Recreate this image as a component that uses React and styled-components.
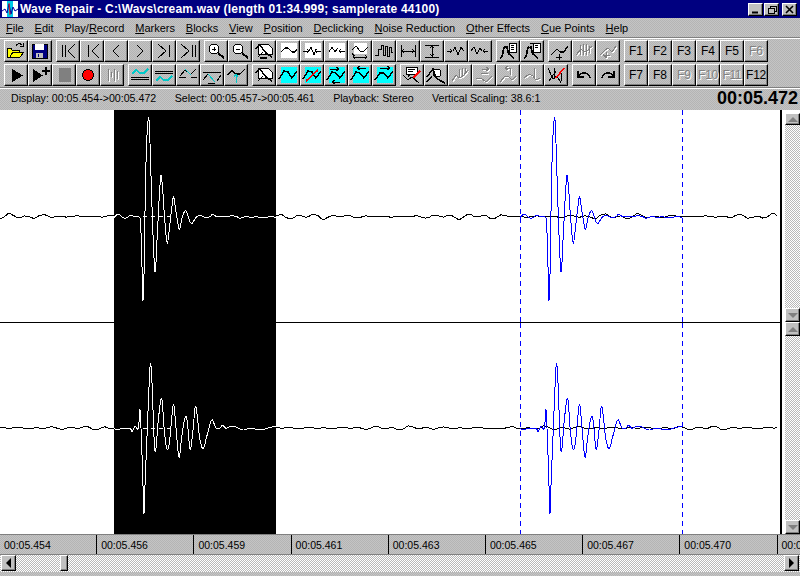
import React from 'react';
import styled, { createGlobalStyle } from 'styled-components';

const dither = `repeating-conic-gradient(#c4c4c4 0 25%, #b4b4b4 0 50%) 0 0 / 2px 2px`;
const track = `repeating-conic-gradient(#ffffff 0 25%, #b8b8b8 0 50%) 0 0 / 2px 2px`;

const Global = createGlobalStyle`
    html, body {
        margin: 0;
        padding: 0;
        background: #c0c0c0;
        overflow: hidden;
    }
    u { text-underline-offset: 1px; }
`;

const Win = styled.div`
    width: 800px;
    height: 576px;
    display: flex;
    flex-direction: column;
    background: ${dither};
    font-family: "Liberation Sans", Arial, sans-serif;
    color: #000;
    overflow: hidden;
`;
const TitleBar = styled.div`
    height: 18px;
    flex: none;
    background: #000080;
    display: flex;
    align-items: center;
    padding: 0 3px 0 2px;
    box-sizing: border-box;
`;
const TitleText = styled.div`
    margin-left: 2px;
    color: #fff;
    font-weight: bold;
    font-size: 12px;
    letter-spacing: 0.2px;
    white-space: nowrap;
    flex: 1;
`;
const WinButton = styled.div`
    width: 15px;
    height: 13px;
    box-sizing: border-box;
    margin-left: ${p => p.$gap || 0}px;
    background: #c0c0c0;
    border: 1px solid;
    border-color: #fff #000 #000 #fff;
    box-shadow: inset -1px -1px #808080;
    display: flex;
    align-items: center;
    justify-content: center;
`;
const MenuBar = styled.div`
    height: 20px;
    flex: none;
    display: flex;
    align-items: center;
    gap: 10.85px;
    padding-left: 6px;
    font-size: 11px;
    box-sizing: border-box;
`;
const Toolbar = styled.div`
    flex: none;
    height: 49px;
    box-sizing: border-box;
    padding-top: 1px;
    border-top: 1px solid #fff;
    box-shadow: 0 -1px #808080;
    display: flex;
    flex-direction: column;
    gap: 2px;
`;
const Row = styled.div`
    display: flex;
    gap: 4px;
    padding-left: 4px;
    height: 22px;
`;
const Group = styled.div`
    display: flex;
`;
const Button = styled.div`
    width: 24px;
    height: 22px;
    box-sizing: border-box;
    border: 1px solid;
    border-color: #fff #000 #000 #fff;
    box-shadow: inset -1px -1px #808080;
    display: flex;
    align-items: center;
    justify-content: center;
    font-size: 12px;
    color: ${p => (p.$off ? '#808080' : '#000')};
    text-shadow: ${p => (p.$off ? '1px 1px 0 #fff' : 'none')};
    letter-spacing: ${p => (p.$wide ? '-0.3px' : '0')};
`;
const IconSvg = styled.svg`
    display: block;
    width: 22px;
    height: 20px;
    fill: none;
    stroke: currentColor;
    stroke-width: 1;
    shape-rendering: crispEdges;
    filter: ${p => (p.$off ? 'drop-shadow(1px 1px 0 #fff)' : 'none')};
`;
const StatusBar = styled.div`
    flex: none;
    height: 23px;
    box-sizing: border-box;
    border-top: 1px solid #808080;
    box-shadow: inset 0 1px #fff;
    display: flex;
    align-items: center;
    gap: 18.5px;
    padding: 0 2px 2px 11px;
    font-size: 10.65px;
    white-space: nowrap;
`;
const Clock = styled.div`
    margin-left: auto;
    font-size: 18px;
    font-weight: bold;
`;
const WaveArea = styled.div`
    flex: none;
    height: 424px;
    display: flex;
`;
const Channels = styled.div`
    width: 780px;
    background: #fff;
    display: flex;
    flex-direction: column;
`;
const Pane = styled.svg`
    display: block;
    flex: none;
    width: 780px;
    height: ${p => p.$h}px;
    fill: none;
    shape-rendering: crispEdges;
`;
const Divider = styled.div`
    height: 1px;
    flex: none;
    background: #000;
`;
const VScroll = styled.div`
    width: 20px;
    box-sizing: border-box;
    border-left: 2px solid #000;
    background: #fff;
    padding: 3px 0 0 3px;
    display: flex;
    flex-direction: column;
`;
const VTrack = styled.div`
    flex: ${p => p.$h}px 0 0;
    height: ${p => p.$h}px;
    display: flex;
    flex-direction: column;
    justify-content: space-between;
    background: ${track};
`;
const ArrowBtn = styled.div`
    width: 15px;
    height: ${p => p.$h || 14}px;
    flex: none;
    box-sizing: border-box;
    background: #c0c0c0;
    border: 1px solid;
    border-color: #fff #000 #000 #fff;
    box-shadow: inset -1px -1px #808080;
    display: flex;
    align-items: center;
    justify-content: center;
`;
const Tri = styled.div`
    width: 0;
    height: 0;
    border-left: ${p => (p.$dir === 'right' ? '5px solid #000' : p.$dir === 'left' ? 'none' : '5px solid transparent')};
    border-right: ${p => (p.$dir === 'left' ? '5px solid #000' : p.$dir === 'right' ? 'none' : '5px solid transparent')};
    border-top: ${p => (p.$dir === 'down' ? '5px solid #808080' : p.$dir === 'up' ? 'none' : '5px solid transparent')};
    border-bottom: ${p => (p.$dir === 'up' ? '5px solid #808080' : p.$dir === 'down' ? 'none' : '5px solid transparent')};
`;
const Ruler = styled.div`
    flex: none;
    height: 21px;
    box-sizing: border-box;
    border-top: 1px solid #808080;
    border-bottom: 1px solid #808080;
    display: flex;
    font-size: 10.5px;
    overflow: hidden;
`;
const Tick = styled.div`
    flex: none;
    width: 97.2px;
    box-sizing: border-box;
    border-right: 1px solid #000;
    padding-left: 4px;
    line-height: 20px;
    white-space: nowrap;
`;
const HScroll = styled.div`
    flex: none;
    height: 17px;
    display: flex;
    align-items: flex-start;
    justify-content: space-between;
    padding: 0 1px;
    background: ${track};
    position: relative;
`;
const Thumb = styled.div`
    position: absolute;
    left: 60px;
    top: 0;
    width: 8px;
    height: 16px;
    box-sizing: border-box;
    background: #c0c0c0;
    border: 1px solid;
    border-color: #fff #000 #000 #fff;
    box-shadow: inset -1px -1px #808080;
`;
const HArrow = styled(ArrowBtn)`
    height: 16px;
`;

/* icons: coordinates are those of the 24x22 button */
const Ico = ({ off, children }) => (
    <IconSvg viewBox="1 1 22 20" $off={off}>{children}</IconSvg>
);
const P = ({ d, c, w }) => <path d={d} stroke={c} strokeWidth={w} />;
const Cyan = () => <path d="M5 3H21V19H5Z" stroke="none" fill="#00ffff" />;
const Paper = () => <path d="M5 3H21V18H5Z" stroke="none" fill="#fff" />;

const ICONS = {
    open: <><path d="M3 8H7L8 10H15V17H3Z" fill="#ffff00" stroke="#000" /><path d="M6 17L9 12H20L16 17Z" fill="#ffff00" stroke="#000" /><P d="M12 6C13 3 16 3 18 5M16 6H19V3" c="#000" /></>,
    save: <><path d="M4 4H19V18H4Z" fill="#000080" stroke="#000" /><path d="M7 4H16V10H7Z" fill="#fff" stroke="none" /><path d="M8 13H15V18H8Z" fill="#c0c0c0" stroke="none" /><P d="M10 14V17" c="#000080" /></>,
    first: <P d="M6 5V17M9 5V17M19 4L12 11L19 18" />,
    prevm: <P d="M8 5V17M19 4L12 11L19 18" />,
    prev: <P d="M15 5L9 11L15 17" w="1.4" />,
    next: <P d="M9 5L15 11L9 17" w="1.4" />,
    nextm: <P d="M17 5V17M6 4L14 11L6 18" />,
    last: <P d="M19 5V17M16 5V17M5 4L13 11L5 18" />,
    zin: <><circle cx="10" cy="9" r="5" fill="#fff" /><P d="M14 13L20 18" w="2" /><P d="M8 9H12M10 7V11" /></>,
    zout: <><circle cx="10" cy="9" r="5" fill="#fff" /><P d="M14 13L20 18" w="2" /><P d="M8 9H12" /></>,
    zwave: <><path d="M6 4H16L20 8V14H6Z" fill="#fff" /><P d="M3 9L8 5L14 13L20 17M6 17L11 12M8 18L15 18" w="1.4" /></>,
    fit: <><Paper /><P d="M5 12L9 8L12 8L16 12L19 12L21 9" w="1.4" /></>,
    arrin: <><Paper /><P d="M3 11H9M7 9L9 11L7 13M21 11H15M17 9L15 11L17 13M9 11L11 7L14 15L16 9" /></>,
    arrout: <><Paper /><P d="M5 12L8 7L11 12L14 8M15 11H21M17 9L15 11L17 13" /></>,
    stretch: <><path d="M6 3H19V14H6Z" fill="#fff" stroke="none" /><P d="M4 10L8 6L12 11L16 11L20 7M5 17H19M7 15L5 17L7 19M17 15L19 17L17 19M4 13L6 16" /></>,
    pulse: <P d="M3 15H6V9H9V5H11V15H13V6H15V16H17V7H19V12H21" />,
    hspan: <P d="M5 5V17M19 5V17M5 11H19M8 9L6 11L8 13M16 9L18 11L16 13" />,
    vspan: <P d="M5 5H19M5 17H19M12 5V17M10 8L12 6L14 8M10 14L12 16L14 14" />,
    inwave: <P d="M3 11H8M6 9L8 11L6 13M9 11L11 7L14 15L17 7L20 11" />,
    outwave: <P d="M3 11L6 7L9 14L12 8L14 11M20 11H15M17 9L15 11L17 13" />,
    fig1: <><path d="M13 3H20V12H13Z" fill="#fff" /><P d="M15 5H18M15 7H18M15 9H18" /><P d="M4 18C7 17 7 12 8 8L11 7L12 12L13 14L18 18" w="1.6" /><P d="M6 12L9 6L11 9" /></>,
    fig2: <><path d="M13 3H20V12H13Z" fill="#fff" /><P d="M15 5H18M15 7H18" /><P d="M4 18C7 17 7 12 8 8L11 7L12 12L13 14L18 18" w="1.6" /><P d="M10 3H14M6 12L9 6" /></>,
    cueadd: <><P d="M3 15L9 9L12 12L16 12L20 6" w="1.4" /><P d="M8 17H14M11 14V20" /></>,
    cuedis: <P d="M4 15L9 9L12 12L16 10L20 6M8 5V15M11 4V15M14 4V15M17 6V13" />,
    cuedis2: <P d="M4 15L8 11L12 8L16 12L20 6M7 15H14M10 12V18M7 14L10 18" />,
    play: <path d="M8 5L19 11.5L8 18Z" fill="#000" stroke="none" />,
    playp: <><path d="M5 5L15 11.5L5 18Z" fill="#000" stroke="none" /><path d="M18 3V11M14 7H22" stroke="#000" strokeWidth="2" /></>,
    stop: <path d="M7 4H19V18H7Z" fill="#808080" stroke="none" />,
    rec: <circle cx="12" cy="11" r="5.5" fill="#ff0000" stroke="#000" />,
    bars: <P d="M8 5V17M11 8V13M14 5V17M17 7V15" />,
    blockTop: <><P d="M3 13H21M3 15H21" /><path d="M4 10L8 6L12 9L16 9L20 5" stroke="#00c8c8" strokeWidth="1.5" /></>,
    blockBot: <><P d="M3 7H21M3 9H21" /><path d="M4 17L8 13L12 16L16 16L20 12" stroke="#00c8c8" strokeWidth="1.5" /></>,
    blockLeft: <><P d="M3 13H10M15 13H21M4 12L9 6L11 8M15 10L20 5" /><path d="M9 5L15 11" stroke="#00c8c8" /></>,
    blockRight: <><P d="M3 8H21M3 16L8 10M17 17L21 11M8 19H15" /><path d="M8 10L15 18" stroke="#00c8c8" /></>,
    blockUp: <><P d="M3 11L8 7L12 10L16 10L21 5" w="1.4" /><path d="M12 19V10M10 13L12 10L14 13" stroke="#00c8c8" /></>,
    crossw: <><path d="M6 4H16L20 8V14H6Z" fill="#fff" /><P d="M3 9L8 5L14 13L20 17M6 17L11 12" w="1.4" /></>,
    c1: <><Cyan /><P d="M3 15L8 7L12 8L16 14L21 7" w="1.4" /></>,
    c2: <><Cyan /><P d="M3 15L8 7L12 8L16 14L21 7" w="1.4" /><path d="M6 17L18 6" stroke="#ff0000" strokeWidth="1.6" /></>,
    c3: <><Cyan /><P d="M3 16L8 8L12 9L16 14L21 7" w="1.4" /><P d="M6 5H14M12 3L15 5L12 7M9 18H16M11 16L8 18L11 20" /></>,
    c4: <><Cyan /><P d="M3 16L8 8L12 9L16 14L21 7" w="1.4" /><P d="M18 4H10M12 2L9 4L12 6" /></>,
    c5: <><Cyan /><P d="M3 16L8 9L12 9L16 14L21 7" w="1.4" /><P d="M8 4H17M15 2L18 4L15 6" /></>,
    speech: <><path d="M6 3H17V10H10L8 13V10H6Z" fill="#fff" stroke="#000" /><P d="M8 5H15M8 7H13M3 11L8 16L12 13L19 19" /><path d="M13 14L20 7" stroke="#ff0000" strokeWidth="1.6" /></>,
    magwave: <><circle cx="13" cy="9" r="4" fill="#fff" /><P d="M3 13L9 5L12 14L15 16L21 19M3 18L8 12" w="1.4" /></>,
    d1: <P d="M4 17L8 11L11 14L15 12L20 6M11 5V13M14 4V12M17 4V10" />,
    d2: <P d="M4 14L9 14L14 18L20 12M10 5H16M14 3L17 5L14 7M9 9H16" />,
    d3: <P d="M4 18L9 12L13 13L16 16L20 12M14 4H10M12 2L9 4L12 6M14 4V11" />,
    d4: <P d="M4 14L9 10L13 12L16 16L20 14M14 4V14" />,
    cross2: <><P d="M4 4L9 15L13 12L17 19M5 17L12 7M10 4V15M17 9V17" /><path d="M12 14L20 4" stroke="#ff0000" strokeWidth="1.6" /></>,
    undo: <P d="M6 7V13H12M7 12C10 7 16 8 18 14" w="1.5" />,
    redo: <P d="M18 7V13H12M17 12C14 7 8 8 6 14" w="1.5" />,
};

const ROW1 = [
    [['open'], ['save']],
    [['first'], ['prevm'], ['prev'], ['next'], ['nextm'], ['last']],
    [['zin'], ['zout'], ['zwave'], ['fit'], ['arrin'], ['arrout'], ['stretch'], ['pulse'], ['hspan'], ['vspan'], ['inwave'], ['outwave']],
    [['fig1'], ['fig2']],
    [['cueadd'], ['cuedis', 1], ['cuedis2', 1]],
    [['F1'], ['F2'], ['F3'], ['F4'], ['F5'], ['F6', 1]],
];
const ROW2 = [
    [['play'], ['playp'], ['stop'], ['rec'], ['bars', 1]],
    [['blockTop'], ['blockBot'], ['blockLeft'], ['blockRight'], ['blockUp']],
    [['crossw'], ['c1'], ['c2'], ['c3'], ['c4'], ['c5']],
    [['speech'], ['magwave'], ['d1', 1], ['d2', 1], ['d3', 1], ['d4', 1], ['cross2']],
    [['undo'], ['redo']],
    [['F7'], ['F8'], ['F9', 1], ['F10', 1], ['F11', 1], ['F12']],
];

const ToolRow = ({ groups }) => (
    <Row>
        {groups.map((g, i) => (
            <Group key={i}>
                {g.map(([name, off]) => (
                    <Button key={name} $off={!!off} $wide={name.length > 2}>
                        {ICONS[name] ? <Ico off={!!off}>{ICONS[name]}</Ico> : name}
                    </Button>
                ))}
            </Group>
        ))}
    </Row>
);

const MENUS = [
    ['F', 'ile'], ['E', 'dit'], ['Play/', 'R', 'ecord'], ['M', 'arkers'], ['B', 'locks'], ['V', 'iew'],
    ['P', 'osition'], ['D', 'eclicking'], ['N', 'oise Reduction'], ['O', 'ther Effects'], ['C', 'ue Points'], ['H', 'elp'],
];

const TICKS = ['454', '456', '459', '461', '463', '465', '467', '470', '472'];

/* burst shapes read off the reference, x relative to the start of the selection */
const BURST_TOP = [[12,322],[25,312],[35,320],[47,325],[62,316],[75,320],[88,322],[92,345],[97,500],[99,570],[103,450],[107,190],[115,25],[120,100],[126,290],[135,485],[143,350],[152,200],[158,240],[165,340],[172,400],[180,340],[190,262],[197,300],[208,358],[217,320],[228,303],[240,335],[247,340],[258,322],[270,316],[285,322],[300,320],[308,313],[320,320],[335,318],[350,320],[365,317],[380,320],[390,325],[405,320],[425,322],[440,320],[460,324],[480,320],[498,322]];
const BURST_BOTTOM = [[12,235],[22,240],[35,235],[60,236],[67,245],[75,228],[85,235],[90,175],[93,235],[97,340],[100,435],[102,490],[106,380],[112,235],[118,90],[122,40],[127,120],[132,260],[137,303],[145,210],[155,145],[162,230],[170,295],[178,280],[190,165],[198,235],[207,322],[215,260],[225,203],[232,215],[240,298],[248,250],[256,170],[263,210],[270,270],[280,296],[290,260],[305,210],[318,235],[330,235],[338,225],[348,235],[365,228],[380,232],[400,240],[420,235],[440,238],[460,238],[480,232],[498,230]];

// catmull-rom through the read points so the peaks stay round
const burstPath = (pts, dx, dy) => {
    const p = pts.map(([x, y]) => [110 + x / 3 + dx, y / 3 + dy]);
    let d = `M${p[0][0].toFixed(1)} ${p[0][1].toFixed(1)}`;
    for (let i = 0; i < p.length - 1; i++) {
        const a = p[Math.max(i - 1, 0)];
        const b = p[i];
        const c = p[i + 1];
        const e = p[Math.min(i + 2, p.length - 1)];
        const c1 = [b[0] + (c[0] - a[0]) / 6, b[1] + (c[1] - a[1]) / 6];
        const c2 = [c[0] - (e[0] - b[0]) / 6, c[1] - (e[1] - b[1]) / 6];
        d += `C${c1[0].toFixed(1)} ${c1[1].toFixed(1)} ${c2[0].toFixed(1)} ${c2[1].toFixed(1)} ${c[0].toFixed(1)} ${c[1].toFixed(1)}`;
    }
    return d;
};

const noiseLine = (base, seed, amp) => {
    const out = [];
    for (let x = 0; x <= 779; x += 3) {
        const env = 0.65 + 0.45 * Math.sin(x * 0.041 + seed);
        const n = Math.sin(x * 0.37 + seed) * 1.7 + Math.sin(x * 0.19 + seed * 2) * 1.2 + Math.sin(x * 0.83 + seed * 3) * 0.4;
        out.push(`${x},${(base + n * env * amp).toFixed(1)}`);
    }
    return out.join(' ');
};

const Channel = ({ height, base, seed, amp, burst, dy }) => (
    <Pane $h={height} viewBox={`0 0 780 ${height}`}>
        <polyline points={noiseLine(base, seed, amp)} stroke="#000" />
        <rect x="114" y="0" width="162" height={height} fill="#000" />
        <path d={burstPath(burst, 0, dy)} stroke="#fff" />
        <line x1="143" y1={base} x2="172" y2={base} stroke="#fff" strokeDasharray="4 4" />
        <path d={burstPath(burst, 406, dy)} stroke="#0000ff" />
        <line x1="520.5" y1="0" x2="520.5" y2={height} stroke="#0000ff" strokeDasharray="5 4" />
        <line x1="682.5" y1="0" x2="682.5" y2={height} stroke="#0000ff" strokeDasharray="5 4" />
    </Pane>
);

export default function App() {
    return (
        <Win>
            <Global />
            <TitleBar>
                <svg width="16" height="16" viewBox="0 0 16 16">
                    <rect width="16" height="16" fill="#fff" />
                    <rect x="5" y="0" width="6" height="16" fill="#00c8e8" />
                    <path d="M0 10L3 8L5 12L7 3L9 13L11 6L13 10L16 8" stroke="#0000a0" fill="none" />
                    <path d="M7 2L8 14" stroke="#e02020" fill="none" />
                </svg>
                <TitleText>{'Wave Repair - C:\\Wavs\\cream.wav (length 01:34.999; samplerate 44100)'}</TitleText>
                <WinButton>
                    <svg width="9" height="9" viewBox="0 0 9 9"><path d="M1 7.5H7" stroke="#000" strokeWidth="2" /></svg>
                </WinButton>
                <WinButton $gap={1}>
                    <svg width="10" height="9" viewBox="0 0 10 9" fill="none" stroke="#000" shapeRendering="crispEdges"><path d="M3 3V1H9V6H7M1 3H7V8H1Z" /><path d="M3 1.5H9M1 3.5H7" /></svg>
                </WinButton>
                <WinButton $gap={3}>
                    <svg width="9" height="9" viewBox="0 0 9 9"><path d="M1 1L8 8M8 1L1 8" stroke="#000" strokeWidth="1.6" /></svg>
                </WinButton>
            </TitleBar>
            <MenuBar>
                {MENUS.map((m, i) =>
                    m.length === 3 ? (
                        <span key={i}>{m[0]}<u>{m[1]}</u>{m[2]}</span>
                    ) : (
                        <span key={i}><u>{m[0]}</u>{m[1]}</span>
                    )
                )}
            </MenuBar>
            <Toolbar>
                <ToolRow groups={ROW1} />
                <ToolRow groups={ROW2} />
            </Toolbar>
            <StatusBar>
                <span>Display: 00:05.454-&gt;00:05.472</span>
                <span>Select: 00:05.457-&gt;00:05.461</span>
                <span>Playback: Stereo</span>
                <span>Vertical Scaling: 38.6:1</span>
                <Clock>00:05.472</Clock>
            </StatusBar>
            <WaveArea>
                <Channels>
                    <Channel height={212} base={106.5} seed={1.3} amp={1} burst={BURST_TOP} dy={0} />
                    <Divider />
                    <Channel height={211} base={105} seed={4.1} amp={0.7} burst={BURST_BOTTOM} dy={27} />
                </Channels>
                <VScroll>
                    <VTrack $h={209}>
                        <ArrowBtn $h={12}><Tri $dir="up" /></ArrowBtn>
                        <ArrowBtn><Tri $dir="down" /></ArrowBtn>
                    </VTrack>
                    <VTrack $h={212}>
                        <ArrowBtn><Tri $dir="up" /></ArrowBtn>
                        <ArrowBtn><Tri $dir="down" /></ArrowBtn>
                    </VTrack>
                </VScroll>
            </WaveArea>
            <Ruler>
                {TICKS.map(t => <Tick key={t}>00:05.{t}</Tick>)}
            </Ruler>
            <HScroll>
                <HArrow><Tri $dir="left" /></HArrow>
                <Thumb />
                <HArrow><Tri $dir="right" /></HArrow>
            </HScroll>
        </Win>
    );
}
